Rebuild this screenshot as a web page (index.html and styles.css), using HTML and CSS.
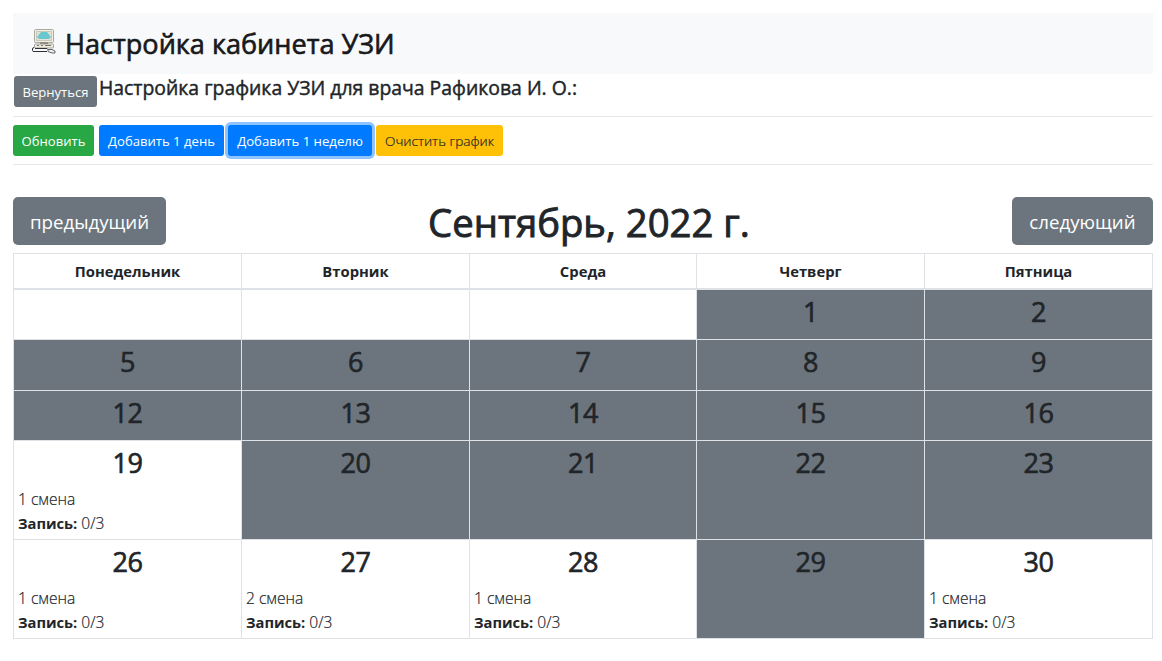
FILE: index.html
```html
<!DOCTYPE html>
<html lang="ru">
<head>
<meta charset="utf-8">
<title>Настройка кабинета УЗИ</title>
<link rel="stylesheet" href="styles.css">
</head>
<body>
<header class="page-header">
  <svg class="logo" width="24" height="26" viewBox="0 0 24 26">
    <rect x="2.5" y="1.5" width="19" height="13" rx="1" fill="#f1eee2" stroke="#aaa99f"/>
    <rect x="4.5" y="3.5" width="15" height="9" fill="#e4e2d5" stroke="#c9c7b9"/>
    <path d="M9 4h6l4 5-2 2H7L5 9z" fill="#69c7d0"/>
    <path d="M8 14.5h8v1.500H8z" fill="#77766e"/>
    <rect x="2.500" y="16" width="19" height="4" rx="1" fill="#eeeadd" stroke="#a6a59c"/>
    <path d="M5 17.500h2M9 17.500h2M13 17.500h6" stroke="#77766e" fill="none"/>
    <path d="M3 20.500h12l2 2M2 19.500Q.5 19.500.5 21v1.500Q.5 23.500 2 23.500h13" fill="none" stroke="#30303b"/>
    <path d="M16 21.500h4l3 1.500v2h-3l-4-1.500z" fill="#f1efe7" stroke="#66656a"/>
  </svg>
  <h3 class="page-title">Настройка кабинета УЗИ</h3>
</header>
<div class="subhead">
  <button class="btn btn-secondary btn-back">Вернуться</button>
  <h5 class="subtitle">Настройка графика УЗИ для врача Рафикова И. О.:</h5>
</div>
<div class="toolbar">
  <button class="btn btn-success">Обновить</button>
  <button class="btn btn-primary btn-day">Добавить 1 день</button>
  <button class="btn btn-primary btn-week is-focused">Добавить 1 неделю</button>
  <button class="btn btn-warning">Очистить график</button>
</div>
<nav class="month-nav">
  <button class="btn btn-secondary btn-lg btn-prev">предыдущий</button>
  <h1 class="month">Сентябрь, 2022 г.</h1>
  <button class="btn btn-secondary btn-lg btn-next">следующий</button>
</nav>
<main class="calendar">
  <div class="weekday">Понедельник</div><div class="weekday">Вторник</div><div class="weekday">Среда</div><div class="weekday">Четверг</div><div class="weekday">Пятница</div>
  <div class="day first"></div><div class="day first"></div><div class="day first"></div><div class="day first off"><h3>1</h3></div><div class="day first off"><h3>2</h3></div>
  <div class="day off"><h3>5</h3></div><div class="day off"><h3>6</h3></div><div class="day off"><h3>7</h3></div><div class="day off"><h3>8</h3></div><div class="day off"><h3>9</h3></div>
  <div class="day off"><h3>12</h3></div><div class="day off"><h3>13</h3></div><div class="day off"><h3>14</h3></div><div class="day off"><h3>15</h3></div><div class="day off"><h3>16</h3></div>
  <div class="day"><h3>19</h3><p>1 смена</p><p><b>Запись:</b> 0/3</p></div><div class="day off"><h3>20</h3></div><div class="day off"><h3>21</h3></div><div class="day off"><h3>22</h3></div><div class="day off"><h3>23</h3></div>
  <div class="day"><h3>26</h3><p>1 смена</p><p><b>Запись:</b> 0/3</p></div><div class="day"><h3>27</h3><p>2 смена</p><p><b>Запись:</b> 0/3</p></div><div class="day"><h3>28</h3><p>1 смена</p><p><b>Запись:</b> 0/3</p></div><div class="day off"><h3>29</h3></div><div class="day"><h3>30</h3><p>1 смена</p><p><b>Запись:</b> 0/3</p></div>
</main>
</body>
</html>
```
FILE: styles.css
```css
* { box-sizing: border-box; }
body { margin: 0; padding: 13px 9px 0 13px; background: #fff; color: #212529; font: 300 15px/24px "Open Sans", "Noto Sans", sans-serif; }
h1, h3, h5, p { margin: 0; font-weight: 400; white-space: nowrap; }
h1, h3, h5 { -webkit-text-stroke: 0.65px currentColor; }
.page-header { height: 61px; background: #f8f9fa; display: flex; align-items: center; padding: 1px 0 1px 19px; }
.logo { margin-top: -5px; }
.page-title { margin-left: 9px; font-size: 27.1px; line-height: 34px; color: #17191c; }
.subhead { height: 43px; display: flex; align-items: flex-start; gap: 2px; padding: 2px 0 0 1px; border-bottom: 1px solid #e8e8e8; }
.subtitle { font-size: 19.4px; line-height: 23px; -webkit-text-stroke-width: 0.45px; }
.btn { height: 31px; padding: 1px 0 0; border: 0; border-radius: 3px; color: #fff; font: 400 13.1px/21px "Open Sans", "Noto Sans", sans-serif; text-align: center; white-space: nowrap; }
.btn-secondary { background: #6c757d; }
.btn-back { width: 83px; }
.toolbar { height: 48px; display: flex; padding-top: 8px; border-bottom: 1px solid #e8e8e8; }
.btn-success { width: 81px; margin-right: 5px; background: #28a745; }
.btn-primary { background: #007bff; }
.btn-day { width: 125px; margin-right: 4px; }
.btn-week { width: 144px; margin-right: 4px; font-size: 13.2px; }
.is-focused { box-shadow: 0 0 0 3px #8dc3ff; }
.btn-warning { width: 127px; padding: 0; background: #ffc107; color: #212529; font-weight: 300; font-size: 13.6px; -webkit-text-stroke: 0.2px currentColor; }
.month-nav { display: flex; justify-content: space-between; height: 88px; padding-top: 32px; }
.btn-lg { height: 48px; border-radius: 5px; font-size: 18.7px; line-height: 28px; }
.btn-prev { width: 153px; }
.btn-next { width: 141px; }
.month { font-size: 38.3px; line-height: 51px; -webkit-text-stroke-width: 0.9px; }
.calendar { display: grid; grid-template-columns: 228px 228px 227px 228px 228px; grid-template-rows: 35px 51px 51px 50px 99px 99px; border: solid #dee2e6; border-width: 0 1px 1px 0; width: 1140px; height: 386px; }
.weekday { border: solid #dee2e6; border-width: 1px 0 0 1px; text-align: center; font-weight: 700; font-size: 14.8px; line-height: 35px; }
.day { border: solid #dee2e6; border-width: 1px 0 0 1px; padding: 5px 4px 0; }
.first { border-top-width: 2px; }
.off { background: #6c757d; }
.day h3 { font-size: 27px; line-height: 33px; letter-spacing: -0.5px; margin-bottom: 8px; text-align: center; }
.day p { font-weight: 300; font-size: 15.6px; -webkit-text-stroke: 0.2px currentColor; }
.day b { font-weight: 700; font-size: 14.7px; -webkit-text-stroke: 0; }
```
